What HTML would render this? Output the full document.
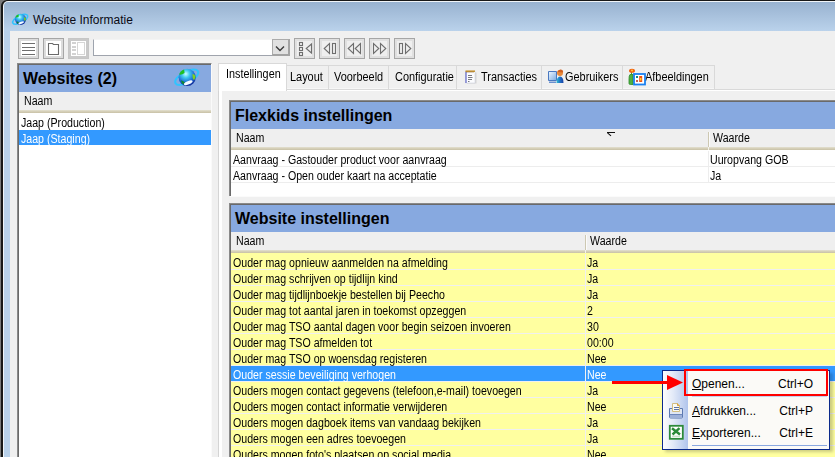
<!DOCTYPE html>
<html><head><meta charset="utf-8">
<style>
*{box-sizing:border-box;margin:0;padding:0}
html,body{width:835px;height:457px;overflow:hidden;background:#f0f0f0;font-family:"Liberation Sans",sans-serif;font-size:11px;color:#000}
.a{position:absolute}
.tb{position:absolute;width:21px;height:21px;border:1px solid #a6a6a6;background:#fff;box-shadow:inset 0 0 0 2px #dcdcdc}
.tb svg{position:absolute;left:0;top:0}
.hb{background:linear-gradient(#e3e0d0,#d5cfb8 50%,#c8c1a6)}
.row{position:absolute;left:0;height:16px;white-space:nowrap}
.row span{position:absolute;top:2px;font-size:12px;transform:scaleX(0.885);transform-origin:0 0}
.tab{position:absolute;top:66px;height:24px;border:1px solid #d9d9d9;border-bottom:none;background:#f0f0f0;white-space:nowrap}
.tab span{position:absolute;top:3.5px;font-size:12px;transform:scaleX(0.885);transform-origin:0 0}
.panel{position:absolute;left:229px;width:606px;background:#fff;border-left:1px solid #8a8a8a;border-top:1px solid #8a8a8a}
.panel .in{position:absolute;left:0;top:0;right:0;bottom:0;border-left:1px solid #6a6a6a;border-top:1px solid #6a6a6a}
.ph{position:absolute;left:1px;top:1px;width:100%;height:27px;background:#87a9e0}
.ph span{position:absolute;left:4px;top:5px;font-size:16px;font-weight:bold;white-space:nowrap}
.ch{position:absolute;left:1px;width:100%;height:18px;background:#efefef}
.ch span{position:absolute;top:2px;font-size:12px;transform:scaleX(0.885);transform-origin:0 0}
.mi{position:absolute;font-size:12px;white-space:nowrap;color:#000}
u{text-decoration:underline}
</style></head><body>
<div class="a" style="left:0;top:0;width:12px;height:457px;background:#7a7a7a"></div>
<div class="a" style="left:1px;top:0;width:834px;height:457px;background:#181818;border-top-left-radius:6px"></div>
<div class="a" style="left:3px;top:1px;width:832px;height:456px;background:#f0f4f8;border-top-left-radius:5px"></div>
<div class="a" style="left:4px;top:2px;width:831px;height:29px;background:linear-gradient(#98b2d0,#bad2eb);border-top-left-radius:4px"></div>
<div class="a" style="left:4px;top:31px;width:6px;height:426px;background:#b9d1ea"></div>
<div class="a" style="left:10px;top:31px;width:825px;height:426px;background:#f0f0f0"></div>
<div class="a" style="left:33px;top:13px;font-size:12px;color:#0a0a14;white-space:nowrap">Website Informatie</div>
<svg class="a" style="left:8px;top:8px" width="24" height="22" viewBox="0 0 24 22">
<defs><radialGradient id="gg" cx="0.42" cy="0.3" r="0.75"><stop offset="0" stop-color="#c8ffff"/><stop offset="0.3" stop-color="#40c8f0"/><stop offset="0.7" stop-color="#1a60d0"/><stop offset="1" stop-color="#10208a"/></radialGradient></defs>
<ellipse cx="12.2" cy="11.2" rx="8.3" ry="3.6" transform="rotate(-28 12.2 11.2)" fill="none" stroke="#30c4ff" stroke-width="1.5"/>
<circle cx="12.5" cy="11.3" r="5.6" fill="url(#gg)"/>
<path d="M7.3 9.5Q8 7 10.5 6.2L10.8 8.5Q9 9.8 7.3 9.5Z" fill="#20c020"/>
<path d="M16 9.2Q17.5 9 18 11L17 13.2Q15.8 12.5 16 9.2Z" fill="#80d020"/>
<path d="M8.5 13.2Q9.5 13.5 11 14.5L10 16Q8.5 15 8.5 13.2Z" fill="#108a30"/>
<ellipse cx="13.2" cy="14.8" rx="3" ry="1.1" fill="#f4fbff" transform="rotate(-22 13.2 14.8)"/>
</svg>
<div class="tb" style="left:18px;top:38px;"><svg width="19" height="19" viewBox="0 0 19 19"><path d="M3 4.5h13M3 8.5h13M3 11.5h13M3 15.5h13" stroke="#6e6e6e" stroke-width="1.1"/></svg></div><div class="tb" style="left:43px;top:38px;"><svg width="19" height="19" viewBox="0 0 19 19"><path d="M4.5 15.5V4.5H8.5L9.5 5.5H14.5V15.5Z" fill="#fff" stroke="#6a6a6a" stroke-width="1.1"/></svg></div><div class="tb" style="left:68px;top:38px;border-color:#c6c6c6;box-shadow:inset 0 0 0 2px #c9c9c9"><svg width="19" height="19" viewBox="0 0 19 19"><g fill="#d2d2d2"><rect x="3" y="3" width="4" height="2"/><rect x="3" y="7" width="4" height="2"/><rect x="3" y="10" width="4" height="2"/><rect x="3" y="14" width="4" height="2"/></g><rect x="8.5" y="3.5" width="7" height="12" fill="#fff" stroke="#d6d6d6"/></svg></div>
<div class="a" style="left:93px;top:39px;width:197px;height:17px;background:#fff;border-left:1px solid #9ea4ae;border-bottom:1px solid #a0a4ad;border-top:1px solid #f4f4f4"></div>
<div class="a" style="left:272px;top:39px;width:18px;height:17px;background:#e1e1e1;border-left:1px solid #ababab;border-top:1px solid #ababab;border-right:2px solid #a3a3a3;border-bottom:2px solid #a3a3a3"><svg class="a" style="left:0;top:0" width="15" height="14" viewBox="0 0 15 14"><path d="M3 6.5l4 4 4-4" fill="none" stroke="#3a3a3a" stroke-width="1.4"/></svg></div>
<div class="tb" style="left:294px;top:38px;background:#efefef;box-shadow:inset 0 0 0 2px #e0e0e0"><svg width="19" height="19" viewBox="0 0 19 19"><g fill="none" stroke="#6e6e6e" stroke-width="1.1"><rect x="4.5" y="3.5" width="3" height="3"/><rect x="4.5" y="8.5" width="3" height="3"/><rect x="4.5" y="13.5" width="3" height="3"/><path d="M16.5 5V14L11.2 9.5Z"/></g></svg></div>
<div class="tb" style="left:319px;top:38px;background:#efefef;box-shadow:inset 0 0 0 2px #e0e0e0"><svg width="19" height="19" viewBox="0 0 19 19"><g fill="none" stroke="#6e6e6e" stroke-width="1.1"><path d="M9.5 4.5V14.5L4.2 9.5Z"/><rect x="12.5" y="4.5" width="3" height="10"/></g></svg></div>
<div class="tb" style="left:344px;top:38px;background:#efefef;box-shadow:inset 0 0 0 2px #e0e0e0"><svg width="19" height="19" viewBox="0 0 19 19"><g fill="none" stroke="#6e6e6e" stroke-width="1.1"><path d="M8.5 4.5V14.5L3.2 9.5Z"/><path d="M15.5 4.5V14.5L10.2 9.5Z"/></g></svg></div>
<div class="tb" style="left:369px;top:38px;background:#efefef;box-shadow:inset 0 0 0 2px #e0e0e0"><svg width="19" height="19" viewBox="0 0 19 19"><g fill="none" stroke="#6e6e6e" stroke-width="1.1"><path d="M3.5 4.5V14.5L8.8 9.5Z"/><path d="M10.5 4.5V14.5L15.8 9.5Z"/></g></svg></div>
<div class="tb" style="left:394px;top:38px;background:#efefef;box-shadow:inset 0 0 0 2px #e0e0e0"><svg width="19" height="19" viewBox="0 0 19 19"><g fill="none" stroke="#6e6e6e" stroke-width="1.1"><rect x="4.5" y="4.5" width="3" height="10"/><path d="M10.5 4.5V14.5L15.8 9.5Z"/></g></svg></div>
<div class="a" style="left:17px;top:63px;width:195px;height:394px;background:#fff;border-left:1px solid #8a8a8a;border-top:1px solid #8a8a8a;border-right:1px solid #fafafa">
<div class="a" style="left:0;top:0;width:1px;height:393px;background:#6a6a6a"></div>
<div class="a" style="left:0;top:0;width:193px;height:1px;background:#6a6a6a"></div>
<div class="a" style="left:1px;top:1px;width:192px;height:27px;background:#87a9e0"><span class="a" style="left:4px;top:5px;font-size:16px;font-weight:bold;white-space:nowrap">Websites (2)</span>
<svg class="a" style="left:149.3px;top:-5.5px" width="36.84" height="33.77" viewBox="0 0 24 22">
<defs><radialGradient id="gg2" cx="0.42" cy="0.3" r="0.75"><stop offset="0" stop-color="#c8ffff"/><stop offset="0.3" stop-color="#40c8f0"/><stop offset="0.7" stop-color="#1a60d0"/><stop offset="1" stop-color="#10208a"/></radialGradient></defs>
<ellipse cx="12.2" cy="11.2" rx="8.3" ry="3.6" transform="rotate(-28 12.2 11.2)" fill="none" stroke="#30c4ff" stroke-width="1.3"/>
<circle cx="12.5" cy="11.3" r="5.6" fill="url(#gg2)"/>
<path d="M7.3 9.5Q8 7 10.5 6.2L10.8 8.5Q9 9.8 7.3 9.5Z" fill="#20c020"/>
<path d="M16 9.2Q17.5 9 18 11L17 13.2Q15.8 12.5 16 9.2Z" fill="#80d020"/>
<path d="M8.5 13.2Q9.5 13.5 11 14.5L10 16Q8.5 15 8.5 13.2Z" fill="#108a30"/>
<ellipse cx="13.2" cy="14.8" rx="3" ry="1.1" fill="#f4fbff" transform="rotate(-22 13.2 14.8)"/>
</svg></div>
<div class="a" style="left:1px;top:28px;width:192px;height:18px;background:#efefef"><span class="a" style="left:5px;top:2px;font-size:12px;transform:scaleX(0.885);transform-origin:0 0">Naam</span></div>
<div class="a hb" style="left:1px;top:46px;width:192px;height:3px"></div>
<div class="row" style="left:1px;top:50px;width:192px"><span style="left:2px;top:2px">Jaap (Production)</span></div>
<div class="row" style="left:1px;top:66px;width:192px;height:15px;background:#3399ff;color:#fff"><span style="left:2px;top:2px">Jaap (Staging)</span></div>
</div>
<div class="a" style="left:218px;top:89px;width:617px;height:368px;background:#fff;border-left:1px solid #d4d4d4;border-top:1px solid #d9d9d9"></div>
<div class="a" style="left:222px;top:91px;width:613px;height:366px;background:#f0f0f0"></div>
<div class="tab" style="left:218px;top:63px;width:69px;height:28px;background:#fff;z-index:2"><span style="left:6.50px;top:3px;transform:scaleX(0.9)">Instellingen</span></div>
<div class="tab" style="left:286px;top:65px;height:24px;width:43px;box-shadow:inset 0 -1px #f7f7f7"><span style="left:3.20px;top:4px;transform:scaleX(0.91)">Layout</span></div>
<div class="tab" style="left:328px;top:65px;height:24px;width:61px;box-shadow:inset 0 -1px #f7f7f7"><span style="left:5.00px;top:4px;transform:scaleX(0.91)">Voorbeeld</span></div>
<div class="tab" style="left:388px;top:65px;height:24px;width:69px;box-shadow:inset 0 -1px #f7f7f7"><span style="left:5.60px;top:4px;transform:scaleX(0.91)">Configuratie</span></div>
<div class="tab" style="left:456px;top:65px;height:24px;width:86px;box-shadow:inset 0 -1px #f7f7f7"><span style="left:23.80px;top:4px;transform:scaleX(0.91)">Transacties</span></div>
<div class="tab" style="left:541px;top:65px;height:24px;width:82px;box-shadow:inset 0 -1px #f7f7f7"><span style="left:23.10px;top:4px;transform:scaleX(0.91)">Gebruikers</span></div>
<div class="tab" style="left:622px;top:65px;height:24px;width:93px;box-shadow:inset 0 -1px #f7f7f7"><span style="left:22.40px;top:4px;transform:scaleX(0.91)">Afbeeldingen</span></div>
<svg class="a" style="left:460px;top:66px;z-index:3" width="22" height="22" viewBox="0 0 22 22">
<rect x="7" y="6.5" width="9.5" height="11" fill="#a0a0a0" opacity="0.35"/>
<path d="M5.5 5.5h9.5v11.5H5.5z" fill="#fbfcfe" stroke="#d0d4e0" stroke-width="0.6"/>
<path d="M6 5.5v11.5" stroke="#6a70c8" stroke-width="1.3"/>
<path d="M5.5 5.2h9.5" stroke="#c89838" stroke-width="1.6"/>
<path d="M7 6.6v-1M9 6.6v-1M11 6.6v-1M13 6.6v-1" stroke="#7a5020" stroke-width="0.9"/>
<path d="M8 9.5h4M8 11.5h4.5M8 13.5h4M8 15.5h1.5" stroke="#6a6a72" stroke-width="0.9"/>
</svg>
<svg class="a" style="left:545px;top:66px;z-index:3" width="22" height="22" viewBox="0 0 22 22">
<defs><linearGradient id="scr" x1="0" y1="0" x2="1" y2="1"><stop offset="0" stop-color="#f0f8ff"/><stop offset="1" stop-color="#7aaae0"/></linearGradient>
<linearGradient id="bod" x1="0" y1="0" x2="1" y2="0"><stop offset="0" stop-color="#30c0d0"/><stop offset="0.5" stop-color="#2070c8"/><stop offset="1" stop-color="#1a40a0"/></linearGradient></defs>
<path d="M3.5 5.5h8v9h-8z" fill="url(#scr)" stroke="#4a78c0" stroke-width="1"/>
<path d="M4 15.5h7v1.5H4z" fill="#6a90d0"/>
<path d="M11.5 17q0-6.5 3.5-6.5t3.5 6.5z" fill="url(#bod)"/>
<circle cx="15" cy="7" r="3" fill="#e88838"/>
<path d="M12.5 6q1-3 3.5-2.5t2 3" fill="#d06020"/>
</svg>
<svg class="a" style="left:626px;top:66px;z-index:3" width="22" height="22" viewBox="0 0 22 22">
<path d="M4 8.5q-1 1-1 4v5q0 1 1.5 1h2.5v-10z" fill="#50b040" stroke="#2a8a2a" stroke-width="0.8"/>
<path d="M5.5 6v3" stroke="#3a9a30" stroke-width="1"/>
<ellipse cx="6" cy="4.8" rx="3" ry="2" fill="#f06010"/>
<circle cx="6" cy="4.5" r="1" fill="#ffd040"/>
<rect x="8" y="8" width="11" height="10.5" fill="#fff" stroke="#1a80f0" stroke-width="1.8"/>
<rect x="10" y="10" width="2" height="2" fill="#108a80"/>
<rect x="13.2" y="10" width="3" height="6" fill="#f05010"/>
<rect x="14" y="12" width="1.4" height="2.5" fill="#ffd030"/>
<rect x="10" y="14" width="2" height="2" fill="#c86050"/>
</svg>
<div class="panel" style="top:100px;height:96px"><div class="in"></div><div class="ph"><span>Flexkids instellingen</span></div><div class="ch" style="top:28px"><span style="left:5px">Naam</span><span style="left:482px">Waarde</span></div><div class="a" style="left:478px;top:31px;width:1px;height:15px;background:#cdc8b2"></div><div class="a" style="left:479px;top:31px;width:1px;height:15px;background:#fbfbfb"></div><svg class="a" style="left:377px;top:31px" width="10" height="6" viewBox="0 0 10 6"><path d="M0 0.5h8M0.5 0.8l3.5 3" stroke="#111" stroke-width="1.1" fill="none"/></svg><div class="a hb" style="left:1px;top:46px;width:100%;height:3px"></div><div class="a" style="left:478px;top:46px;width:1px;height:4px;background:#f4f3ee"></div><div class="a" style="left:1px;top:49px;width:100%;height:1px;background:#fff"></div><div class="a" style="left:1px;top:50px;width:100%;height:15px;background:#fff"></div><div class="a" style="left:1px;top:65px;width:100%;height:1px;background:#ededed"></div><div class="a" style="left:478px;top:50px;width:1px;height:15px;background:#ededed"></div><div class="a" style="left:1px;top:66px;width:100%;height:15px;background:#fff"></div><div class="a" style="left:1px;top:81px;width:100%;height:1px;background:#ededed"></div><div class="a" style="left:478px;top:66px;width:1px;height:15px;background:#ededed"></div><div class="row" style="left:1px;top:50px;width:100%;height:15px;color:#000"><span style="left:2px">Aanvraag - Gastouder product voor aanvraag</span><span style="left:478.6px">Uuropvang GOB</span></div><div class="row" style="left:1px;top:66px;width:100%;height:15px;color:#000"><span style="left:2px">Aanvraag - Open ouder kaart na acceptatie</span><span style="left:478.6px">Ja</span></div></div>
<div class="a" style="left:230px;top:196px;width:605px;height:1px;background:#fbfbfb"></div>
<div class="panel" style="top:203px;height:254px"><div class="in"></div><div class="ph"><span>Website instellingen</span></div><div class="ch" style="top:28px"><span style="left:5px">Naam</span><span style="left:359px">Waarde</span></div><div class="a" style="left:355px;top:31px;width:1px;height:15px;background:#cdc8b2"></div><div class="a" style="left:356px;top:31px;width:1px;height:15px;background:#fbfbfb"></div><div class="a hb" style="left:1px;top:46px;width:100%;height:3px"></div><div class="a" style="left:355px;top:46px;width:1px;height:4px;background:#f4f3ee"></div><div class="a" style="left:1px;top:49px;width:100%;height:1px;background:#ffffa0"></div><div class="a" style="left:1px;top:50px;width:100%;height:15px;background:#ffffa0"></div><div class="a" style="left:1px;top:65px;width:100%;height:1px;background:#f0f0f0"></div><div class="a" style="left:355px;top:50px;width:1px;height:15px;background:#f0f0f0"></div><div class="a" style="left:1px;top:66px;width:100%;height:15px;background:#ffffa0"></div><div class="a" style="left:1px;top:81px;width:100%;height:1px;background:#f0f0f0"></div><div class="a" style="left:355px;top:66px;width:1px;height:15px;background:#f0f0f0"></div><div class="a" style="left:1px;top:82px;width:100%;height:15px;background:#ffffa0"></div><div class="a" style="left:1px;top:97px;width:100%;height:1px;background:#f0f0f0"></div><div class="a" style="left:355px;top:82px;width:1px;height:15px;background:#f0f0f0"></div><div class="a" style="left:1px;top:98px;width:100%;height:15px;background:#ffffa0"></div><div class="a" style="left:1px;top:113px;width:100%;height:1px;background:#f0f0f0"></div><div class="a" style="left:355px;top:98px;width:1px;height:15px;background:#f0f0f0"></div><div class="a" style="left:1px;top:114px;width:100%;height:15px;background:#ffffa0"></div><div class="a" style="left:1px;top:129px;width:100%;height:1px;background:#f0f0f0"></div><div class="a" style="left:355px;top:114px;width:1px;height:15px;background:#f0f0f0"></div><div class="a" style="left:1px;top:130px;width:100%;height:15px;background:#ffffa0"></div><div class="a" style="left:1px;top:145px;width:100%;height:1px;background:#f0f0f0"></div><div class="a" style="left:355px;top:130px;width:1px;height:15px;background:#f0f0f0"></div><div class="a" style="left:1px;top:146px;width:100%;height:15px;background:#ffffa0"></div><div class="a" style="left:1px;top:161px;width:100%;height:1px;background:#f0f0f0"></div><div class="a" style="left:355px;top:146px;width:1px;height:15px;background:#f0f0f0"></div><div class="a" style="left:1px;top:162px;width:100%;height:15px;background:#3399ff"></div><div class="a" style="left:1px;top:177px;width:100%;height:1px;background:#f0f0f0"></div><div class="a" style="left:355px;top:162px;width:1px;height:15px;background:#f0f0f0"></div><div class="a" style="left:1px;top:178px;width:100%;height:15px;background:#ffffa0"></div><div class="a" style="left:1px;top:193px;width:100%;height:1px;background:#f0f0f0"></div><div class="a" style="left:355px;top:178px;width:1px;height:15px;background:#f0f0f0"></div><div class="a" style="left:1px;top:194px;width:100%;height:15px;background:#ffffa0"></div><div class="a" style="left:1px;top:209px;width:100%;height:1px;background:#f0f0f0"></div><div class="a" style="left:355px;top:194px;width:1px;height:15px;background:#f0f0f0"></div><div class="a" style="left:1px;top:210px;width:100%;height:15px;background:#ffffa0"></div><div class="a" style="left:1px;top:225px;width:100%;height:1px;background:#f0f0f0"></div><div class="a" style="left:355px;top:210px;width:1px;height:15px;background:#f0f0f0"></div><div class="a" style="left:1px;top:226px;width:100%;height:15px;background:#ffffa0"></div><div class="a" style="left:1px;top:241px;width:100%;height:1px;background:#f0f0f0"></div><div class="a" style="left:355px;top:226px;width:1px;height:15px;background:#f0f0f0"></div><div class="a" style="left:1px;top:242px;width:100%;height:15px;background:#ffffa0"></div><div class="a" style="left:1px;top:257px;width:100%;height:1px;background:#f0f0f0"></div><div class="a" style="left:355px;top:242px;width:1px;height:15px;background:#f0f0f0"></div><div class="row" style="left:1px;top:50px;width:100%;height:15px;color:#000"><span style="left:2px">Ouder mag opnieuw aanmelden na afmelding</span><span style="left:355.6px">Ja</span></div><div class="row" style="left:1px;top:66px;width:100%;height:15px;color:#000"><span style="left:2px">Ouder mag schrijven op tijdlijn kind</span><span style="left:355.6px">Ja</span></div><div class="row" style="left:1px;top:82px;width:100%;height:15px;color:#000"><span style="left:2px">Ouder mag tijdlijnboekje bestellen bij Peecho</span><span style="left:355.6px">Ja</span></div><div class="row" style="left:1px;top:98px;width:100%;height:15px;color:#000"><span style="left:2px">Ouder mag tot aantal jaren in toekomst opzeggen</span><span style="left:355.6px">2</span></div><div class="row" style="left:1px;top:114px;width:100%;height:15px;color:#000"><span style="left:2px">Ouder mag TSO aantal dagen voor begin seizoen invoeren</span><span style="left:355.6px">30</span></div><div class="row" style="left:1px;top:130px;width:100%;height:15px;color:#000"><span style="left:2px">Ouder mag TSO afmelden tot</span><span style="left:355.6px">00:00</span></div><div class="row" style="left:1px;top:146px;width:100%;height:15px;color:#000"><span style="left:2px">Ouder mag TSO op woensdag registeren</span><span style="left:355.6px">Nee</span></div><div class="row" style="left:1px;top:162px;width:100%;height:15px;color:#fff"><span style="left:2px">Ouder sessie beveiliging verhogen</span><span style="left:355.6px">Nee</span></div><div class="row" style="left:1px;top:178px;width:100%;height:15px;color:#000"><span style="left:2px">Ouders mogen contact gegevens (telefoon,e-mail) toevoegen</span><span style="left:355.6px">Ja</span></div><div class="row" style="left:1px;top:194px;width:100%;height:15px;color:#000"><span style="left:2px">Ouders mogen contact informatie verwijderen</span><span style="left:355.6px">Nee</span></div><div class="row" style="left:1px;top:210px;width:100%;height:15px;color:#000"><span style="left:2px">Ouders mogen dagboek items van vandaag bekijken</span><span style="left:355.6px">Ja</span></div><div class="row" style="left:1px;top:226px;width:100%;height:15px;color:#000"><span style="left:2px">Ouders mogen een adres toevoegen</span><span style="left:355.6px">Ja</span></div><div class="row" style="left:1px;top:242px;width:100%;height:15px;color:#000"><span style="left:2px">Ouders mogen foto's plaatsen op social media</span><span style="left:355.6px">Nee</span></div></div>
<div class="a" style="left:665px;top:373px;width:168px;height:79px;background:rgba(0,0,0,0.2);filter:blur(1.5px)"></div>
<div class="a" style="left:662px;top:370px;width:168px;height:80px;background:#fbfaf7;border:1px solid #0b2a8c">
<div class="a" style="left:0;top:0;width:25px;height:78px;background:linear-gradient(90deg,#fdfdfe,#e3eaf8 40%,#b0c4ec)"></div>
<div class="mi" style="left:29px;top:6px"><u>O</u>penen...</div><div class="mi" style="right:16px;top:6px">Ctrl+O</div>
<div class="a" style="left:29px;top:25px;width:135px;height:1px;background:#c5d2ee"></div>
<div class="mi" style="left:29px;top:33px"><u>A</u>fdrukken...</div><div class="mi" style="right:16px;top:33px">Ctrl+P</div>
<div class="mi" style="left:29px;top:55px"><u>E</u>xporteren...</div><div class="mi" style="right:16px;top:55px">Ctrl+E</div>
<div class="a" style="left:29px;top:74px;width:135px;height:1px;background:#8aa8e0"></div>

</div>
<svg class="a" style="left:666px;top:400px" width="20" height="20" viewBox="0 0 20 20">
<path d="M3.5 8.5h13v8.5q0 1-1 1h-11q-1 0-1-1z" fill="#dfe6f3" stroke="#5b78b0" stroke-width="1"/>
<path d="M4 14.5h12v3H4z" fill="#9db0d8"/>
<path d="M3.5 14.5h13" stroke="#6d86bb" stroke-width="1"/>
<path d="M6.5 11.5V3.5h5l2 2v6z" fill="#fbfaf2" stroke="#d2bd80" stroke-width="1"/>
<path d="M11.5 3.5v2h2" fill="#f0c070" stroke="#d8a040" stroke-width="1"/>
<path d="M8 7.5h5M8 9.5h5" stroke="#5a72a8" stroke-width="1"/>
</svg>
<svg class="a" style="left:666px;top:421px" width="20" height="20" viewBox="0 0 20 20">
<rect x="3.8" y="4.8" width="13" height="13" fill="#fff" stroke="#2d8a3a" stroke-width="1.8"/>
<path d="M6 7.2L14 13.5M13.5 7.2L6.5 13.5" stroke="#2a8a38" stroke-width="2.4"/>
<path d="M6 15.2h8" stroke="#9cc8a0" stroke-width="0.8"/>
</svg>
<div class="a" style="left:684px;top:369px;width:144px;height:27px;border:2px solid #ff0000"></div>
<div class="a" style="left:612px;top:381px;width:58px;height:3px;background:#ff0000"></div>
<svg class="a" style="left:666px;top:374px" width="18" height="18" viewBox="0 0 18 18"><path d="M1 1L17 8.5L1 16z" fill="#ff0000"/></svg>
</body></html>
